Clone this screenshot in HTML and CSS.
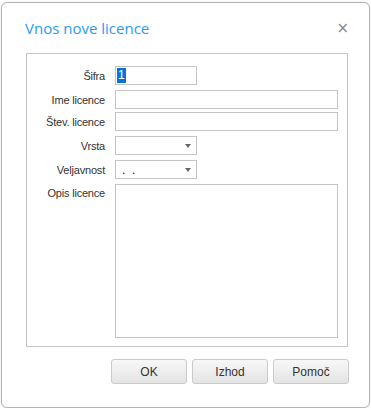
FILE: index.html
```html
<!DOCTYPE html>
<html lang="sl">
<head>
    <meta charset="UTF-8">
    <title>Vnos nove licence</title>
    <link rel="stylesheet" href="styles.css">
</head>
<body>

<div class="dialog">
    <div class="dialog-header">
        <h1>Vnos nove licence</h1>
        <span class="close">&times;</span>
    </div>

    <div class="panel">
        <div class="row">
            <label>Šifra</label>
            <div class="field short"><span class="sel">1</span></div>
        </div>
        <div class="row tight">
            <label>Ime licence</label>
            <div class="field long"></div>
        </div>
        <div class="row">
            <label>Štev. licence</label>
            <div class="field long"></div>
        </div>
        <div class="row">
            <label>Vrsta</label>
            <div class="field short combo"><span class="arrow"></span></div>
        </div>
        <div class="row">
            <label>Veljavnost</label>
            <div class="field short combo"><span class="dots">.&nbsp;&nbsp;.</span><span class="arrow"></span></div>
        </div>
        <div class="row area-row">
            <label>Opis licence</label>
            <div class="field long area"></div>
        </div>
    </div>

    <div class="buttons">
        <button class="btn">OK</button>
        <button class="btn">Izhod</button>
        <button class="btn">Pomoč</button>
    </div>
</div>

</body>
</html>
```

FILE: styles.css
```css
body { margin: 0; background: #fff; font-family: "Liberation Sans", Arial, sans-serif; font-size: 11px; color: #222; }
.dialog { box-sizing: border-box; width: 369px; height: 406px; margin: 2px 0 0 1px; border: 1px solid #b4b4b4; border-radius: 6px; background: #fff; box-shadow: 0 0 2px rgba(0, 0, 0, 0.15); display: flex; flex-direction: column; }
.dialog-header { display: flex; justify-content: space-between; align-items: center; height: 50px; padding: 0 20px 0 23px; }
.dialog-header h1 { margin: 0; font-family: "Open Sans", sans-serif; font-weight: 400; font-size: 15px; color: #2b9af3; }
.close { font-family: "DejaVu Sans", sans-serif; font-size: 15px; color: #888; }
.panel { box-sizing: border-box; width: 322px; margin-left: 24px; border: 1px solid #c4c4c4; padding: 12px 0 8px 0; }
.row { display: flex; align-items: center; margin-bottom: 5px; }
.row.tight { margin-bottom: 3px; }
.row.area-row { align-items: flex-start; margin-bottom: 0; }
.row label { width: 78px; text-align: right; margin-right: 10px; letter-spacing: -0.2px; color: #333; }
.area-row label { margin-top: 3px; }
.field { box-sizing: border-box; height: 19px; border: 1px solid #c4c4c4; background: #fff; position: relative; display: flex; align-items: center; }
.field.short { width: 82px; }
.field.long { width: 223px; }
.field.area { height: 154px; }
.sel { margin-left: 1px; padding: 0 1px; background: #0a73d8; color: #fff; font-size: 12px; line-height: 15px; }
.dots { margin-left: 6px; font-size: 12px; }
.arrow { position: absolute; right: 5px; top: 7px; width: 0; height: 0; border-left: 3px solid transparent; border-right: 3px solid transparent; border-top: 4px solid #666; }
.buttons { display: flex; justify-content: flex-end; gap: 5px; padding: 12px 20px 0 0; }
.btn { box-sizing: border-box; width: 76px; height: 25px; border: 1px solid #cacaca; border-radius: 3px; background: linear-gradient(#f7f7f7, #e4e4e4); font-family: "Liberation Sans", Arial, sans-serif; font-size: 12px; color: #333; }
```
